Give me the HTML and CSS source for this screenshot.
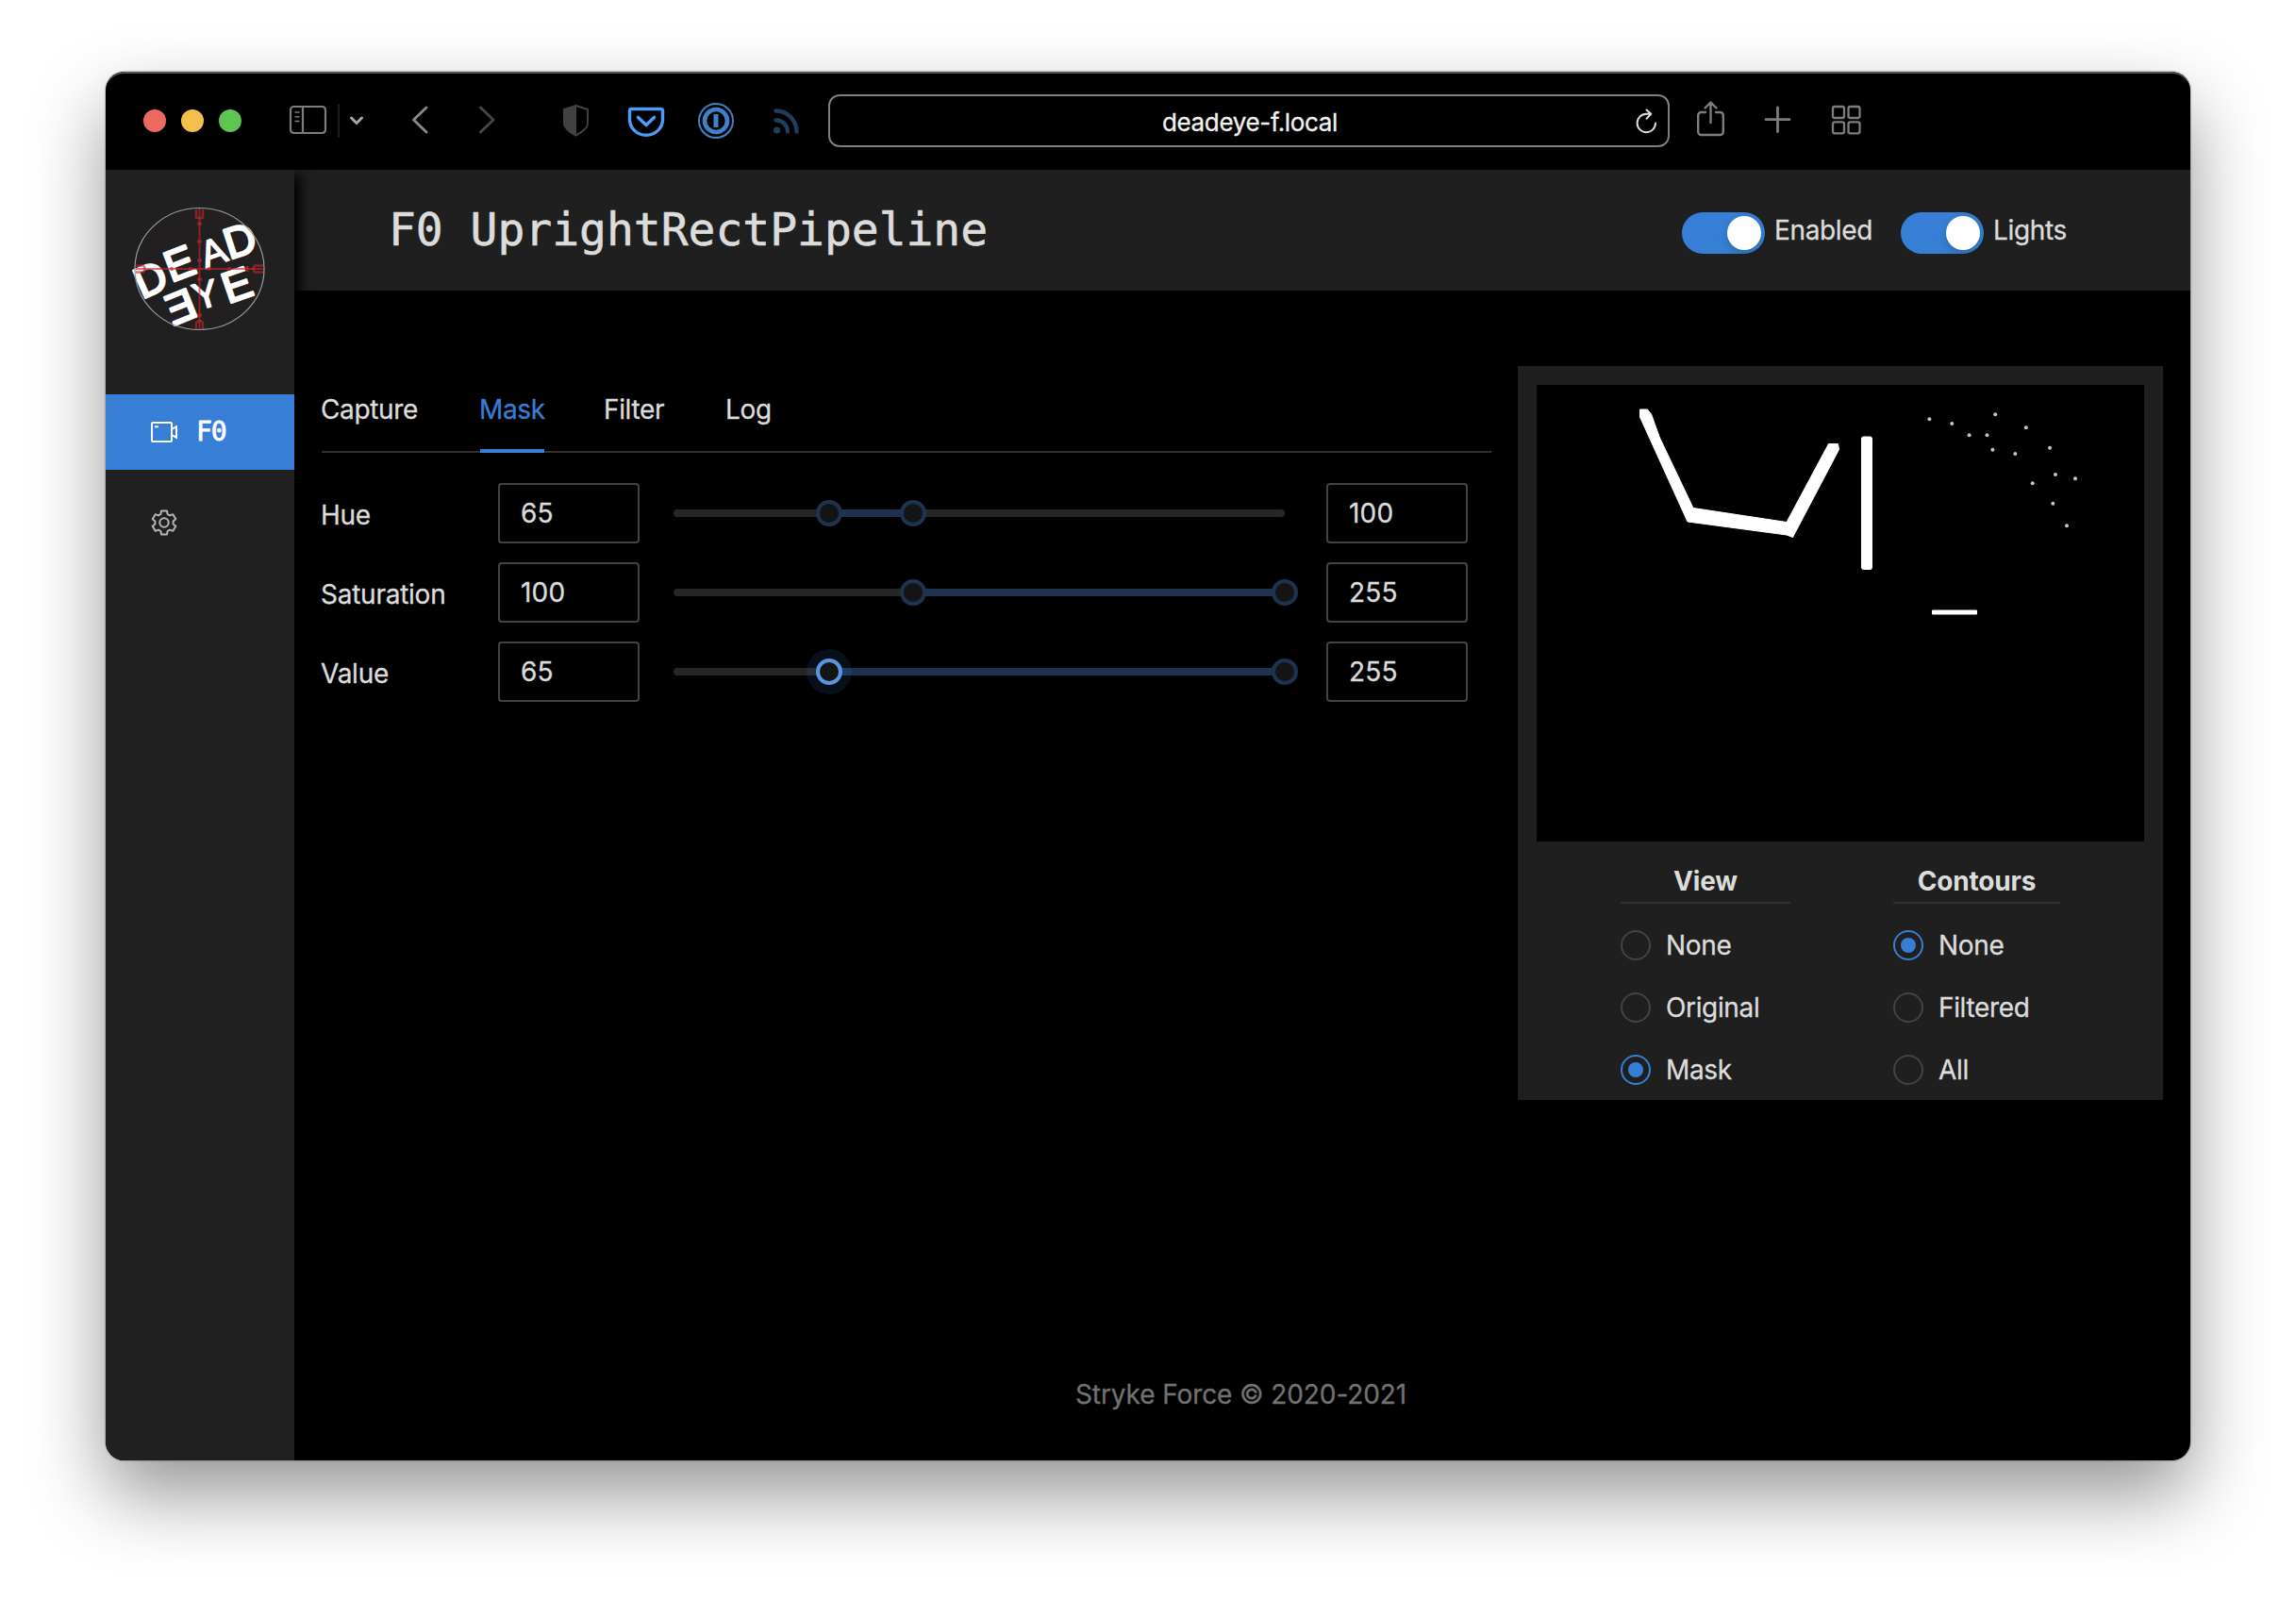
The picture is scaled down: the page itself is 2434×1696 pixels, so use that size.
FILE: index.html
```html
<!DOCTYPE html>
<html lang="en">
<head>
<meta charset="utf-8">
<title>Deadeye</title>
<link rel="stylesheet" href="styles.css">
</head>
<body>
<div class="window">
  <div class="toolbar">
    <div class="lights"><i class="red"></i><i class="yellow"></i><i class="green"></i></div>
    <svg class="i-side" width="44" height="48" viewBox="305 104 44 48" fill="none" stroke="#7d7d7d" stroke-width="2.200"><rect x="308" y="113" width="37" height="28" rx="3.500"/><path d="M321 113v28"/><path d="M312.500 119h5M312.500 123.800h5M312.500 128.500h5" stroke-width="1.500"/></svg>
    <svg class="i-drop" width="32" height="48" viewBox="356 104 32 48" fill="none"><path d="M359 110v36" stroke="#1c1c1c" stroke-width="2"/><path d="M372.500 125l5.500 5.500 5.500-5.500" stroke="#a6a6a6" stroke-width="3" stroke-linecap="round" stroke-linejoin="round"/></svg>
    <svg class="i-back" width="22" height="48" viewBox="434 104 22 48" fill="none" stroke="#8a8a8a" stroke-width="2.800" stroke-linecap="round" stroke-linejoin="round"><path d="M452 114l-13.500 13L452 140"/></svg>
    <svg class="i-fwd" width="22" height="48" viewBox="505 104 22 48" fill="none" stroke="#464646" stroke-width="2.800" stroke-linecap="round" stroke-linejoin="round"><path d="M509.500 114l13.500 13-13.500 13"/></svg>
    <svg class="i-shield" width="32" height="48" viewBox="595 104 32 48"><path d="M610.500 112l12.500 4v15c0 5-6 9-12.500 12.500C604 140 598 136 598 131v-15z" fill="none" stroke="#414141" stroke-width="2" stroke-linejoin="round"/><path d="M611 111.500v32C604 140 597.500 136 597.500 131v-15z" fill="#414141"/></svg>
    <svg class="i-pocket" width="42" height="48" viewBox="664 104 42 48" fill="none" stroke="#4a9df8" stroke-linecap="round" stroke-linejoin="round"><path d="M669.500 115.500h31a2 2 0 0 1 2 2v9a17.500 16.800 0 0 1-35 0v-9a2 2 0 0 1 2-2z" stroke-width="3.400"/><path d="M676.500 124.500l8.500 8 8.500-8" stroke-width="3.600"/></svg>
    <svg class="i-pass" width="42" height="48" viewBox="738 104 42 48" fill="none" stroke="#3d82cb"><circle cx="759" cy="128" r="18" stroke-width="2"/><circle cx="759" cy="128" r="12" stroke-width="4.600"/><path d="M759 121v14" stroke-width="5"/></svg>
    <svg class="i-rss" width="32" height="48" viewBox="818 104 32 48" fill="none" stroke="#223c5d" stroke-width="4.400" stroke-linecap="round"><circle cx="823.500" cy="138" r="3.600" fill="#223c5d" stroke="none"/><path d="M822.500 127.500a12 12 0 0 1 12.500 12M822.500 117.500a22 22 0 0 1 22 22"/></svg>
    <div class="url"><span>deadeye-f.local</span>
      <svg width="26" height="30" viewBox="1732 114 26 30" fill="none" stroke="#dcdcdc" stroke-width="2" stroke-linecap="round" stroke-linejoin="round"><path d="M1755 130.500a9.700 9.700 0 1 1-9.700-9.700h5M1745.500 116.500l4.800 4.300-4.800 5"/></svg>
    </div>
    <svg class="i-share" width="36" height="48" viewBox="1796 104 36 48" fill="none" stroke="#7d7d7d" stroke-width="2.400" stroke-linecap="round" stroke-linejoin="round"><path d="M1808 119h-4.500a3.300 3.300 0 0 0-3.300 3.300v17.400a3.300 3.300 0 0 0 3.300 3.300h20a3.300 3.300 0 0 0 3.300-3.300v-17.400a3.300 3.300 0 0 0-3.300-3.300h-4.500M1813.500 130v-21M1807.500 114.500l6-6 6 6"/></svg>
    <svg class="i-plus" width="32" height="48" viewBox="1869 104 32 48" stroke="#7d7d7d" stroke-width="2.800" stroke-linecap="round"><path d="M1884.500 114v25.500M1872 126.700h25"/></svg>
    <svg class="i-grid" width="34" height="48" viewBox="1940 104 34 48" fill="none" stroke="#7d7d7d" stroke-width="2.300"><rect x="1943" y="113" width="12" height="12" rx="2"/><rect x="1959.500" y="113" width="12" height="12" rx="2"/><rect x="1943" y="129.300" width="12" height="12" rx="2"/><rect x="1959.500" y="129.300" width="12" height="12" rx="2"/></svg>
  </div>
  <div class="app">
    <aside class="sidebar">
      <svg class="logo" width="140" height="132" viewBox="0 0 140 132">
        <ellipse cx="69.500" cy="66" rx="68.500" ry="64.500" fill="#211f20"/>
        <g class="logo-letters">
          <text transform="translate(17.500 77) rotate(-24)" y="16">D</text>
          <text transform="translate(48 60) rotate(-21)" y="16">E</text>
          <text class="small" transform="translate(84 48) rotate(-20)" y="14">A</text>
          <text transform="translate(112 36) rotate(-18)" y="16">D</text>
          <text transform="translate(49.500 106) rotate(-22) scale(-1 1)" y="16">E</text>
          <text class="small" transform="translate(76 93) rotate(-16)" y="14">Y</text>
          <text transform="translate(109 83) rotate(-19)" y="16">E</text>
        </g>
        <g stroke="#c1272d" fill="none" stroke-opacity=".65"><path d="M69.500 2v128M2 66h135" stroke-width="2"/><path d="M66 3v9h7V3M66 130v-7q3.500-4 7 0v7M2 62.500h8q3 3.500 0 7H2M137 62.500h-9q-3 3.500 0 7h9" stroke-width="2.500"/><path d="M67 18h5M67 37h5M67 57h5M67 77h5M67 115h5M40 64v4M60 64v4M80 64v4M101 64v4M120 63v6" stroke-width="3"/></g>
        <ellipse cx="69.500" cy="66" rx="68.500" ry="64.500" fill="none" stroke="#9b9b9b" stroke-width="1.200"/>
      </svg>
      <nav>
        <a class="item active"><svg width="30" height="24" viewBox="0 0 30 24" fill="none" stroke="#fff" stroke-width="2"><rect x="2" y="2" width="21" height="20" rx="1"/><path d="M5 6.300h4" stroke-width="2"/><path d="M23 9l5-2.800v11.600L23 15"/></svg><span>F0</span></a>
        <a class="item"><svg width="30" height="30" viewBox="-15 -15 30 30" fill="none" stroke="#b5b5b5" stroke-width="2" stroke-linejoin="round"><path d="M-3.600-9L-3-12.500H3L3.600-9 6-7.600 9.300-8.850 12.300-3.650 9.600-1.400V1.400L12.300 3.650 9.300 8.850 6 7.600 3.600 9 3 12.500H-3L-3.600 9-6 7.600-9.300 8.850-12.300 3.650-9.600 1.400V-1.400L-12.300-3.650-9.300-8.850-6-7.600Z"/><circle r="4.700"/></svg></a>
      </nav>
    </aside>
    <div class="main">
      <header>
        <h1>F0 UprightRectPipeline</h1>
        <div class="switch-group first"><i class="switch"></i><span>Enabled</span></div>
        <div class="switch-group"><i class="switch"></i><span>Lights</span></div>
      </header>
      <div class="content">
        <section class="controls">
          <div class="tabs"><span class="t1">Capture</span><span class="t2 on">Mask</span><span class="t3">Filter</span><span class="t4">Log</span></div>
          <div class="row"><label>Hue</label><div class="num">65</div>
            <div class="slider"><i class="range" style="left:25.490%;width:13.730%"></i><i class="handle" style="left:25.490%"></i><i class="handle" style="left:39.220%"></i></div><div class="num">100</div></div>
          <div class="row"><label>Saturation</label><div class="num">100</div>
            <div class="slider"><i class="range" style="left:39.220%;width:60.780%"></i><i class="handle" style="left:39.220%"></i><i class="handle" style="left:100%"></i></div><div class="num">255</div></div>
          <div class="row"><label>Value</label><div class="num">65</div>
            <div class="slider"><i class="range" style="left:25.490%;width:74.510%"></i><i class="handle focus" style="left:25.490%"></i><i class="handle" style="left:100%"></i></div><div class="num">255</div></div>
        </section>
        <section class="preview">
          <svg class="video" width="644" height="484" viewBox="0 0 644 484">
            <g fill="#fff" stroke="#fff" stroke-linejoin="round">
              <path d="M109.500 26l8 0 4 5 9 25L166 130.500 265 145.500 309.500 62.500h10l1 6L271.500 161.500l-6.500-2.500L160 145 109.500 34z"/>
              <rect x="344.500" y="55" width="11" height="140.500" rx="2"/>
              <rect x="419.500" y="239" width="47" height="4"/>
            </g>
            <g fill="#c4c4c4"><circle cx="416.400" cy="36.300" r="2"/><circle cx="440.300" cy="41" r="2"/><circle cx="458.600" cy="53.300" r="2"/><circle cx="477.500" cy="53.300" r="2"/><circle cx="483.400" cy="68.700" r="2"/><circle cx="486.200" cy="31.300" r="2"/><circle cx="518.800" cy="45.300" r="2"/><circle cx="507.300" cy="73" r="2"/><circle cx="544" cy="66.700" r="2"/><circle cx="550" cy="95" r="2"/><circle cx="571" cy="99.300" r="2"/><circle cx="525.700" cy="104.300" r="2"/><circle cx="547.300" cy="125.700" r="2"/><circle cx="562" cy="149.300" r="2"/></g>
          </svg>
          <div class="options">
            <div class="group view"><h2>View</h2>
              <div class="radio"><i></i><span>None</span></div><div class="radio"><i></i><span>Original</span></div><div class="radio checked"><i></i><span>Mask</span></div></div>
            <div class="group contours"><h2>Contours</h2>
              <div class="radio checked"><i></i><span>None</span></div><div class="radio"><i></i><span>Filtered</span></div><div class="radio"><i></i><span>All</span></div></div>
          </div>
        </section>
      </div>
      <footer>Stryke Force © 2020-2021</footer>
    </div>
  </div>
</div>
</body>
</html>
```

FILE: styles.css
```css
* { box-sizing: border-box; }
body {
  margin: 0; width: 2434px; height: 1696px; padding: 76px 112px 148px;
  background: #fff; overflow: hidden;
  font: 28px/34px Inter, "Liberation Sans", sans-serif; color: #dcdcdc;
  letter-spacing: -0.35px;
  -webkit-text-stroke: .3px currentColor;
}
.window {
  display: flex; flex-direction: column; width: 2210px; height: 1472px;
  border-radius: 20px; background: #000; overflow: hidden;
  box-shadow: 0 0 2px rgba(0,0,0,.6), 0 36px 80px rgba(0,0,0,.42);
}
svg { display: block; flex: none; }
.toolbar {
  display: flex; align-items: center; height: 104px; flex: none; padding-left: 40px;
  background: #000; border-top: 2px solid #555; position: relative; z-index: 3;
  border-radius: 20px 20px 0 0;
}
.toolbar > * { margin-top: -2px; }
.lights { display: flex; gap: 16px; margin-right: 49px; }
.lights i { width: 24px; height: 24px; border-radius: 50%; }
.red { background: #ed6a5e; }
.yellow { background: #f5bf4f; }
.green { background: #61c554; }
.i-drop { margin-left: 7px; }
.i-back { margin-left: 46px; }
.i-fwd { margin-left: 49px; }
.i-shield { margin-left: 68px; }
.i-pocket { margin-left: 37px; }
.i-pass { margin-left: 32px; }
.i-rss { margin-left: 38px; }
.url {
  display: flex; align-items: center; width: 892px; height: 56px; margin-left: 28px;
  border: 2px solid #7f7f7f; border-radius: 12px; padding: 3px 10px 0 0;
  font-size: 26px; color: #f2f2f2;
}
.url span { flex: 1; text-align: center; padding-left: 38px; }
.url svg { margin-top: -2px; }
.i-share { margin-left: 26px; }
.i-plus { margin-left: 37px; }
.i-grid { margin-left: 39px; }

.app { display: flex; flex: 1; }
.sidebar {
  width: 200px; background: #202020; padding-top: 39px; position: relative; z-index: 2;
  box-shadow: 6px 6px 12px #000;
}
.logo { margin-left: 30px; overflow: visible; }
.logo-letters text {
  font: 46px "Liberation Sans", sans-serif; letter-spacing: 0; text-anchor: middle;
  fill: #fff; stroke: #fff; stroke-width: 2.5; stroke-linejoin: round;
  -webkit-text-stroke: 2.5px #fff;
}
.logo-letters .small { font-size: 40px; stroke-width: 1.5; -webkit-text-stroke: 1.5px #fff; }
nav { margin-top: 67px; }
.item {
  display: flex; align-items: center; height: 80px; margin-bottom: 16px; padding-left: 47px; gap: 19px;
  font-family: "DejaVu Sans Mono", monospace; color: #fff; letter-spacing: -1px;
  -webkit-text-stroke: .8px #fff;
}
.item.active { background: #377fd6; }

.main { flex: 1; display: flex; flex-direction: column; }
header {
  display: flex; align-items: center; height: 128px; padding: 0 131px 0 100px; background: #1f1f1f;
}
h1 {
  margin: 0; flex: 1; padding-bottom: 3px; font: 48px/56px "DejaVu Sans Mono", monospace; letter-spacing: -0.03px;
  -webkit-text-stroke: .6px currentColor;
}
.switch-group { display: flex; align-items: center; width: 176px; gap: 10px; }
.switch-group.first { width: 232px; }
.switch {
  display: flex; justify-content: flex-end; width: 88px; height: 44px; padding: 4px;
  border-radius: 22px; background: #377fd6; margin-top: 6px;
}
.switch::after {
  content: ""; width: 36px; height: 36px; border-radius: 50%; background: #fff;
  box-shadow: 0 4px 8px rgba(0,35,11,.2);
}

.content { display: flex; align-items: flex-start; padding: 80px 29px 0; }
.controls { width: 1240px; margin-right: 28px; }
.tabs {
  display: flex; gap: 64px; height: 92px; border-bottom: 2px solid #303030; margin-bottom: 32px;
}
.tabs span { height: 92px; padding-top: 29px; white-space: nowrap; text-indent: -1px; }
.t1 { width: 104px; }
.t2 { width: 68px; }
.t3 { width: 65px; }
.tabs .on { color: #377fd6; border-bottom: 4px solid #377fd6; }
.row { display: flex; align-items: center; height: 64px; margin-bottom: 20px; }
.row label { width: 187px; padding-top: 4px; text-indent: -1px; letter-spacing: -0.25px; }
.num {
  width: 150px; height: 64px; padding: 13px 0 0 22px; border: 2px solid #434343; border-radius: 4px;
  letter-spacing: 0.2px;
}
.slider {
  position: relative; width: 648px; height: 8px; margin: 0 44px 0 36px;
  border-radius: 4px; background: #262626;
}
.range { position: absolute; top: 0; height: 8px; background: #1d3350; }
.handle {
  position: absolute; top: -10px; width: 28px; height: 28px; margin-left: -14px;
  border-radius: 50%; border: 4px solid #1d3350; background: #141414;
}
.handle.focus { border-color: #5895e0; box-shadow: 0 0 0 10px rgba(55,127,214,.12); }

.preview { width: 684px; height: 778px; padding: 20px; background: #1f1f1f; }
.video { background: #000; }
.options { display: flex; padding: 24px 0 0 89px; gap: 109px; }
.view { width: 180px; }
.contours { width: 177px; }
h2 {
  margin: 0 0 28px; height: 42px; padding-top: 1px; font-size: 28px; line-height: 34px; font-weight: 700;
  text-align: center; border-bottom: 2px solid #303030; letter-spacing: -0.2px;
  -webkit-text-stroke: 0;
}
.radio { display: flex; align-items: center; gap: 16px; height: 32px; margin-bottom: 34px; }
.radio i {
  display: flex; align-items: center; justify-content: center; width: 32px; height: 32px;
  border: 2px solid #434343; border-radius: 50%;
}
.radio.checked i { border-color: #377fd6; }
.radio.checked i::after { content: ""; width: 16px; height: 16px; border-radius: 50%; background: #377fd6; }

footer {
  margin-top: auto; padding: 0 3px 53px 0; text-align: center; color: #717171; letter-spacing: -0.1px;
}
```
